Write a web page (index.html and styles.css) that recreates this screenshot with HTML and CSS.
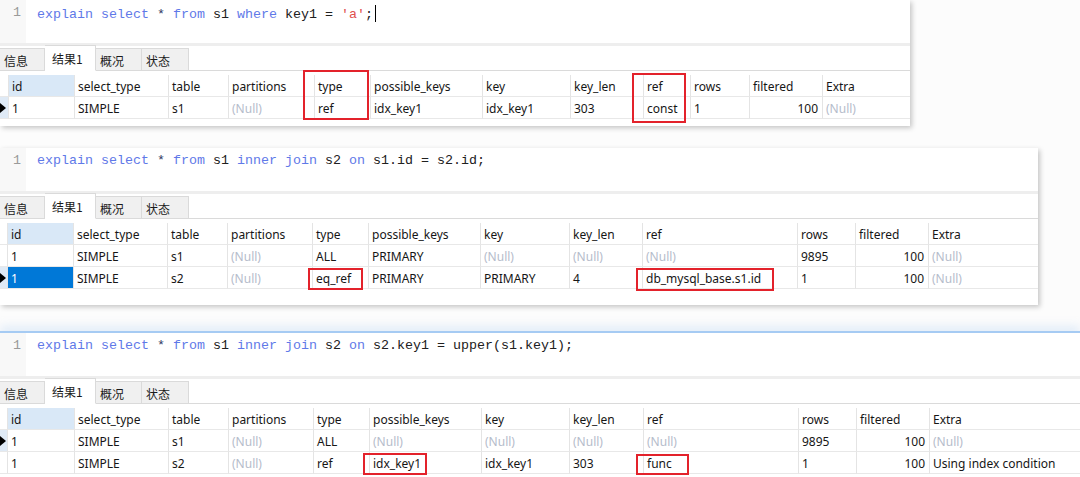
FILE: index.html
```html
<!DOCTYPE html>
<html lang="zh-CN">
<head>
<meta charset="utf-8">
<title>explain</title>
<link rel="stylesheet" href="styles.css">
</head>
<body>
<div class="page">

  <section class="panel p1">
    <div class="editor">
      <div class="gutter">1</div>
      <div class="code"><span class="kw">explain</span> <span class="kw">select</span> <span class="op">*</span> <span class="kw">from</span> s1 <span class="kw">where</span> key1 = <span class="str">'a'</span>;<span class="caret"></span></div>
    </div>
    <div class="band"></div>
    <div class="tabs">
      <div class="tab">信息</div>
      <div class="tab active">结果1</div>
      <div class="tab">概况</div>
      <div class="tab">状态</div>
    </div>
    <div class="grid g1">
      <div class="ind"></div><div class="c h sel">id</div><div class="c h">select_type</div><div class="c h">table</div><div class="c h">partitions</div><div class="c h">type</div><div class="c h">possible_keys</div><div class="c h">key</div><div class="c h">key_len</div><div class="c h">ref</div><div class="c h">rows</div><div class="c h">filtered</div><div class="c h">Extra</div>
      <div class="ind cur"></div><div class="c">1</div><div class="c">SIMPLE</div><div class="c">s1</div><div class="c null">(Null)</div><div class="c">ref</div><div class="c">idx_key1</div><div class="c">idx_key1</div><div class="c">303</div><div class="c">const</div><div class="c">1</div><div class="c num">100</div><div class="c null">(Null)</div>
    </div>
    <div class="mark m1a"></div>
    <div class="mark m1b"></div>
  </section>

  <section class="panel p2">
    <div class="editor">
      <div class="gutter">1</div>
      <div class="code"><span class="kw">explain</span> <span class="kw">select</span> <span class="op">*</span> <span class="kw">from</span> s1 <span class="kw">inner</span> <span class="kw">join</span> s2 <span class="kw">on</span> s1.id = s2.id;</div>
    </div>
    <div class="band"></div>
    <div class="tabs">
      <div class="tab">信息</div>
      <div class="tab active">结果1</div>
      <div class="tab">概况</div>
      <div class="tab">状态</div>
    </div>
    <div class="grid g2">
      <div class="ind"></div><div class="c h sel">id</div><div class="c h">select_type</div><div class="c h">table</div><div class="c h">partitions</div><div class="c h">type</div><div class="c h">possible_keys</div><div class="c h">key</div><div class="c h">key_len</div><div class="c h">ref</div><div class="c h">rows</div><div class="c h">filtered</div><div class="c h">Extra</div>
      <div class="ind"></div><div class="c">1</div><div class="c">SIMPLE</div><div class="c">s1</div><div class="c null">(Null)</div><div class="c">ALL</div><div class="c">PRIMARY</div><div class="c null">(Null)</div><div class="c null">(Null)</div><div class="c null">(Null)</div><div class="c">9895</div><div class="c num">100</div><div class="c null">(Null)</div>
      <div class="ind cur"></div><div class="c picked">1</div><div class="c">SIMPLE</div><div class="c">s2</div><div class="c null">(Null)</div><div class="c">eq_ref</div><div class="c">PRIMARY</div><div class="c">PRIMARY</div><div class="c">4</div><div class="c">db_mysql_base.s1.id</div><div class="c">1</div><div class="c num">100</div><div class="c null">(Null)</div>
    </div>
    <div class="mark m2a"></div>
    <div class="mark m2b"></div>
  </section>

  <section class="panel p3">
    <div class="editor">
      <div class="gutter">1</div>
      <div class="code"><span class="kw">explain</span> <span class="kw">select</span> <span class="op">*</span> <span class="kw">from</span> s1 <span class="kw">inner</span> <span class="kw">join</span> s2 <span class="kw">on</span> s2.key1 = upper(s1.key1);</div>
    </div>
    <div class="band"></div>
    <div class="tabs">
      <div class="tab">信息</div>
      <div class="tab active">结果1</div>
      <div class="tab">概况</div>
      <div class="tab">状态</div>
    </div>
    <div class="grid g3">
      <div class="ind"></div><div class="c h sel">id</div><div class="c h">select_type</div><div class="c h">table</div><div class="c h">partitions</div><div class="c h">type</div><div class="c h">possible_keys</div><div class="c h">key</div><div class="c h">key_len</div><div class="c h">ref</div><div class="c h">rows</div><div class="c h">filtered</div><div class="c h">Extra</div>
      <div class="ind cur"></div><div class="c">1</div><div class="c">SIMPLE</div><div class="c">s1</div><div class="c null">(Null)</div><div class="c">ALL</div><div class="c null">(Null)</div><div class="c null">(Null)</div><div class="c null">(Null)</div><div class="c null">(Null)</div><div class="c">9895</div><div class="c num">100</div><div class="c null">(Null)</div>
      <div class="ind"></div><div class="c">1</div><div class="c">SIMPLE</div><div class="c">s2</div><div class="c null">(Null)</div><div class="c">ref</div><div class="c">idx_key1</div><div class="c">idx_key1</div><div class="c">303</div><div class="c">func</div><div class="c">1</div><div class="c num">100</div><div class="c">Using index condition</div>
    </div>
    <div class="mark m3a"></div>
    <div class="mark m3b"></div>
  </section>

</div>
</body>
</html>
```

FILE: styles.css
```css
* { box-sizing: border-box; }

html, body {
  margin: 0;
  padding: 0;
  background: #fcfcfc;
  width: 1080px;
  height: 477px;
  overflow: hidden;
}

.page {
  display: flex;
  flex-direction: column;
  align-items: flex-start;
}

.panel {
  position: relative;
  background: #ffffff;
  box-shadow: 2px 2px 5px rgba(0, 0, 0, 0.22);
  font-family: "Noto Sans", "Noto Sans CJK SC", sans-serif;
  font-size: 12px;
  color: #161616;
}

.p1 { width: 910px; height: 126px; }
.p2 { width: 1038px; height: 157px; margin-top: 22px; }
.p3 {
  width: 1080px;
  height: 146px;
  margin-top: 26px;
  border-top: 2px solid #a6cbf3;
  box-shadow: 0 -6px 8px rgba(166, 203, 243, 0.25);
}

/* editor */
.editor {
  height: 43px;
  display: flex;
  background: #ffffff;
}
.gutter {
  width: 26px;
  background: #f8f8f8;
  color: #9a9a9a;
  font-family: "Liberation Mono", monospace;
  font-size: 13.33px;
  line-height: 16px;
  padding: 5px 0 0 13px;
}
.code {
  padding: 5px 0 0 11px;
  font-family: "Liberation Mono", monospace;
  font-size: 13.33px;
  line-height: 16px;
  color: #202020;
  white-space: pre;
}
.kw { color: #5f79e8; }
.op { color: #2e3560; }
.str { color: #e0504d; }
.caret {
  display: inline-block;
  width: 1px;
  height: 17px;
  margin-left: 2px;
  vertical-align: -4px;
  background: #000;
}

.band {
  height: 3px;
  background: #eeeeee;
}

/* tabs */
.tabs {
  height: 25px;
  display: flex;
  align-items: flex-end;
  border-bottom: 1px solid #dadada;
  font-family: "Noto Sans CJK SC", sans-serif;
  font-size: 12px;
}
.tab {
  height: 23px;
  margin-bottom: -1px;
  background: #f0f0f0;
  border: 1px solid #dadada;
  border-left: none;
  padding: 1px 0 0 4px;
  line-height: 21px;
  color: #1b1b1b;
}
.tab:nth-child(1) { width: 45px; }
.tab:nth-child(2) { width: 51px; }
.tab:nth-child(3) { width: 46px; }
.tab:nth-child(4) { width: 47px; }
.tab.active {
  height: 26px;
  background: #ffffff;
  border-bottom-color: #ffffff;
  padding-left: 7px;
  line-height: 23px;
}

/* grid */
.grid {
  display: grid;
  margin-top: 4px;
  grid-auto-rows: 22px;
}
.g1 { grid-template-columns: 8px 66px 94px 60px 86px 56px 112px 88px 73px 47px 59px 73px 88px; }
.g2 { grid-template-columns: 7px 66px 94px 60px 85px 56px 112px 89px 73px 155px 58px 73px 110px; }
.g3 { grid-template-columns: 7px 67px 94px 60px 85px 56px 112px 88px 74px 155px 58px 73px 151px; }

.c {
  border-left: 1px solid #e4e4e4;
  border-bottom: 1px solid #e8e8e8;
  padding: 1px 0 0 3px;
  line-height: 21px;
  white-space: nowrap;
  overflow: hidden;
}
.ind {
  position: relative;
  border-bottom: 1px solid #e8e8e8;
}
.ind.cur { background: #dfeaf6; }
.ind.cur::after {
  content: "";
  position: absolute;
  left: 0;
  top: 6px;
  border-left: 6px solid #000;
  border-top: 5px solid transparent;
  border-bottom: 5px solid transparent;
}
.h.sel { background: #d9e8f7; }
.picked { background: #0078d7; color: #ffffff; }
.null { color: #b5bccb; }
.num { text-align: right; padding-right: 4px; }

/* red annotation boxes */
.mark {
  position: absolute;
  border: 2px solid #e3222b;
}
.m1a { left: 303px; top: 70px; width: 66px; height: 50px; }
.m1b { left: 632px; top: 73px; width: 54px; height: 50px; }
.m2a { left: 308px; top: 120px; width: 55px; height: 22px; }
.m2b { left: 636px; top: 120px; width: 138px; height: 23px; }
.m3a { left: 363px; top: 120px; width: 64px; height: 22px; }
.m3b { left: 636px; top: 121px; width: 53px; height: 21px; }
```
